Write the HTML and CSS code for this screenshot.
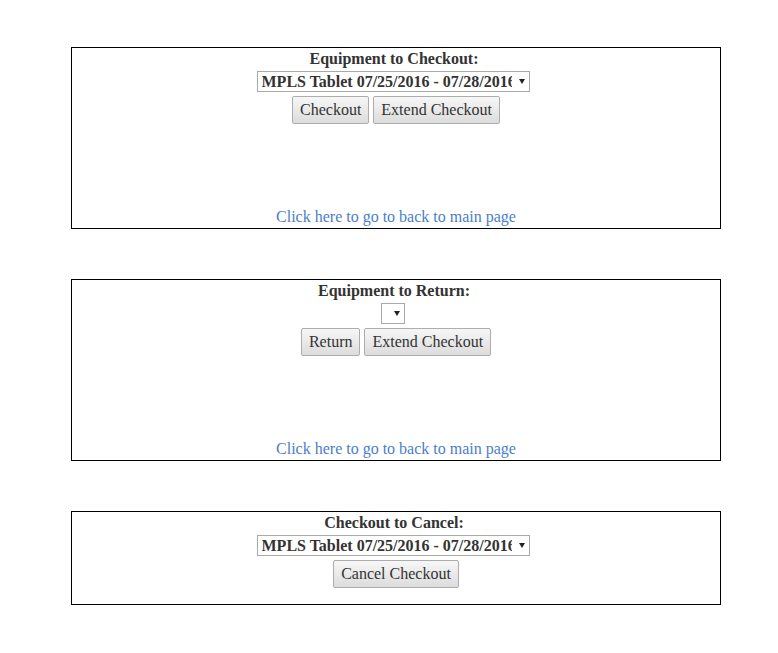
FILE: index.html
```html
<!DOCTYPE html>
<html>
<head>
<meta charset="utf-8">
<link rel="stylesheet" href="styles.css">
</head>
<body>
<div class="page">
  <div class="panel tall">
    <div class="head">
      <div class="title">Equipment to Checkout:</div>
      <span class="select-wrap"><select class="sel"><option>MPLS Tablet 07/25/2016 - 07/28/2016</option></select><span class="arrow"></span></span>
      <div class="btns"><button class="btn">Checkout</button><button class="btn">Extend Checkout</button></div>
    </div>
    <a class="link" href="#">Click here to go to back to main page</a>
  </div>
  <div class="panel tall">
    <div class="head">
      <div class="title">Equipment to Return:</div>
      <span class="select-wrap"><select class="sel empty"></select><span class="arrow"></span></span>
      <div class="btns"><button class="btn">Return</button><button class="btn">Extend Checkout</button></div>
    </div>
    <a class="link" href="#">Click here to go to back to main page</a>
  </div>
  <div class="panel short">
    <div class="head">
      <div class="title">Checkout to Cancel:</div>
      <span class="select-wrap"><select class="sel"><option>MPLS Tablet 07/25/2016 - 07/28/2016</option></select><span class="arrow"></span></span>
      <div class="btns"><button class="btn">Cancel Checkout</button></div>
    </div>
  </div>
</div>
</body>
</html>
```

FILE: styles.css
```css
html, body {
  margin: 0;
  padding: 0;
  background: #fff;
}
body {
  font-family: "Liberation Serif", "Times New Roman", serif;
  font-size: 16px;
  color: #333;
}
.page {
  padding: 47px 0 0 71px;
  width: 650px;
  display: flex;
  flex-direction: column;
  gap: 50px;
}
.panel {
  box-sizing: border-box;
  width: 650px;
  border: 1px solid #000;
  display: flex;
  flex-direction: column;
  align-items: center;
}
.panel.tall {
  height: 182px;
  justify-content: space-between;
}
.panel.short {
  height: 94px;
}
.head {
  display: flex;
  flex-direction: column;
  align-items: center;
  padding-top: 2px;
}
.title {
  font-weight: bold;
  line-height: 18px;
  height: 18px;
  padding-right: 4px;
}
.select-wrap {
  position: relative;
  display: inline-block;
  margin-top: 3px;
  margin-right: 6px;
  height: 21px;
}
.sel {
  -webkit-appearance: none;
  appearance: none;
  display: block;
  box-sizing: border-box;
  width: 273px;
  height: 21px;
  border: 1px solid #a9a9a9;
  border-radius: 0;
  background: #fff;
  font-family: "Liberation Serif", "Times New Roman", serif;
  font-size: 16px;
  font-weight: bold;
  color: #333;
  padding: 0 17px 0 4px;
  margin: 0;
  outline: none;
}
.sel.empty {
  width: 24px;
  padding: 0;
}
.arrow {
  position: absolute;
  right: 5px;
  top: 8px;
  width: 0;
  height: 0;
  border-left: 3px solid transparent;
  border-right: 3px solid transparent;
  border-top: 5px solid #222;
  pointer-events: none;
}
.btns {
  display: flex;
  gap: 4px;
  margin-top: 4px;
}
.btn {
  box-sizing: border-box;
  height: 28px;
  padding: 0 7px;
  border: 1px solid #adadad;
  border-radius: 2px;
  background: linear-gradient(#f7f7f7, #dcdcdc);
  font-family: "Liberation Serif", "Times New Roman", serif;
  font-size: 16px;
  color: #333;
  margin: 0;
}
.link {
  color: #4a7ec9;
  text-decoration: none;
  line-height: 18px;
  margin-bottom: 2px;
}
```
